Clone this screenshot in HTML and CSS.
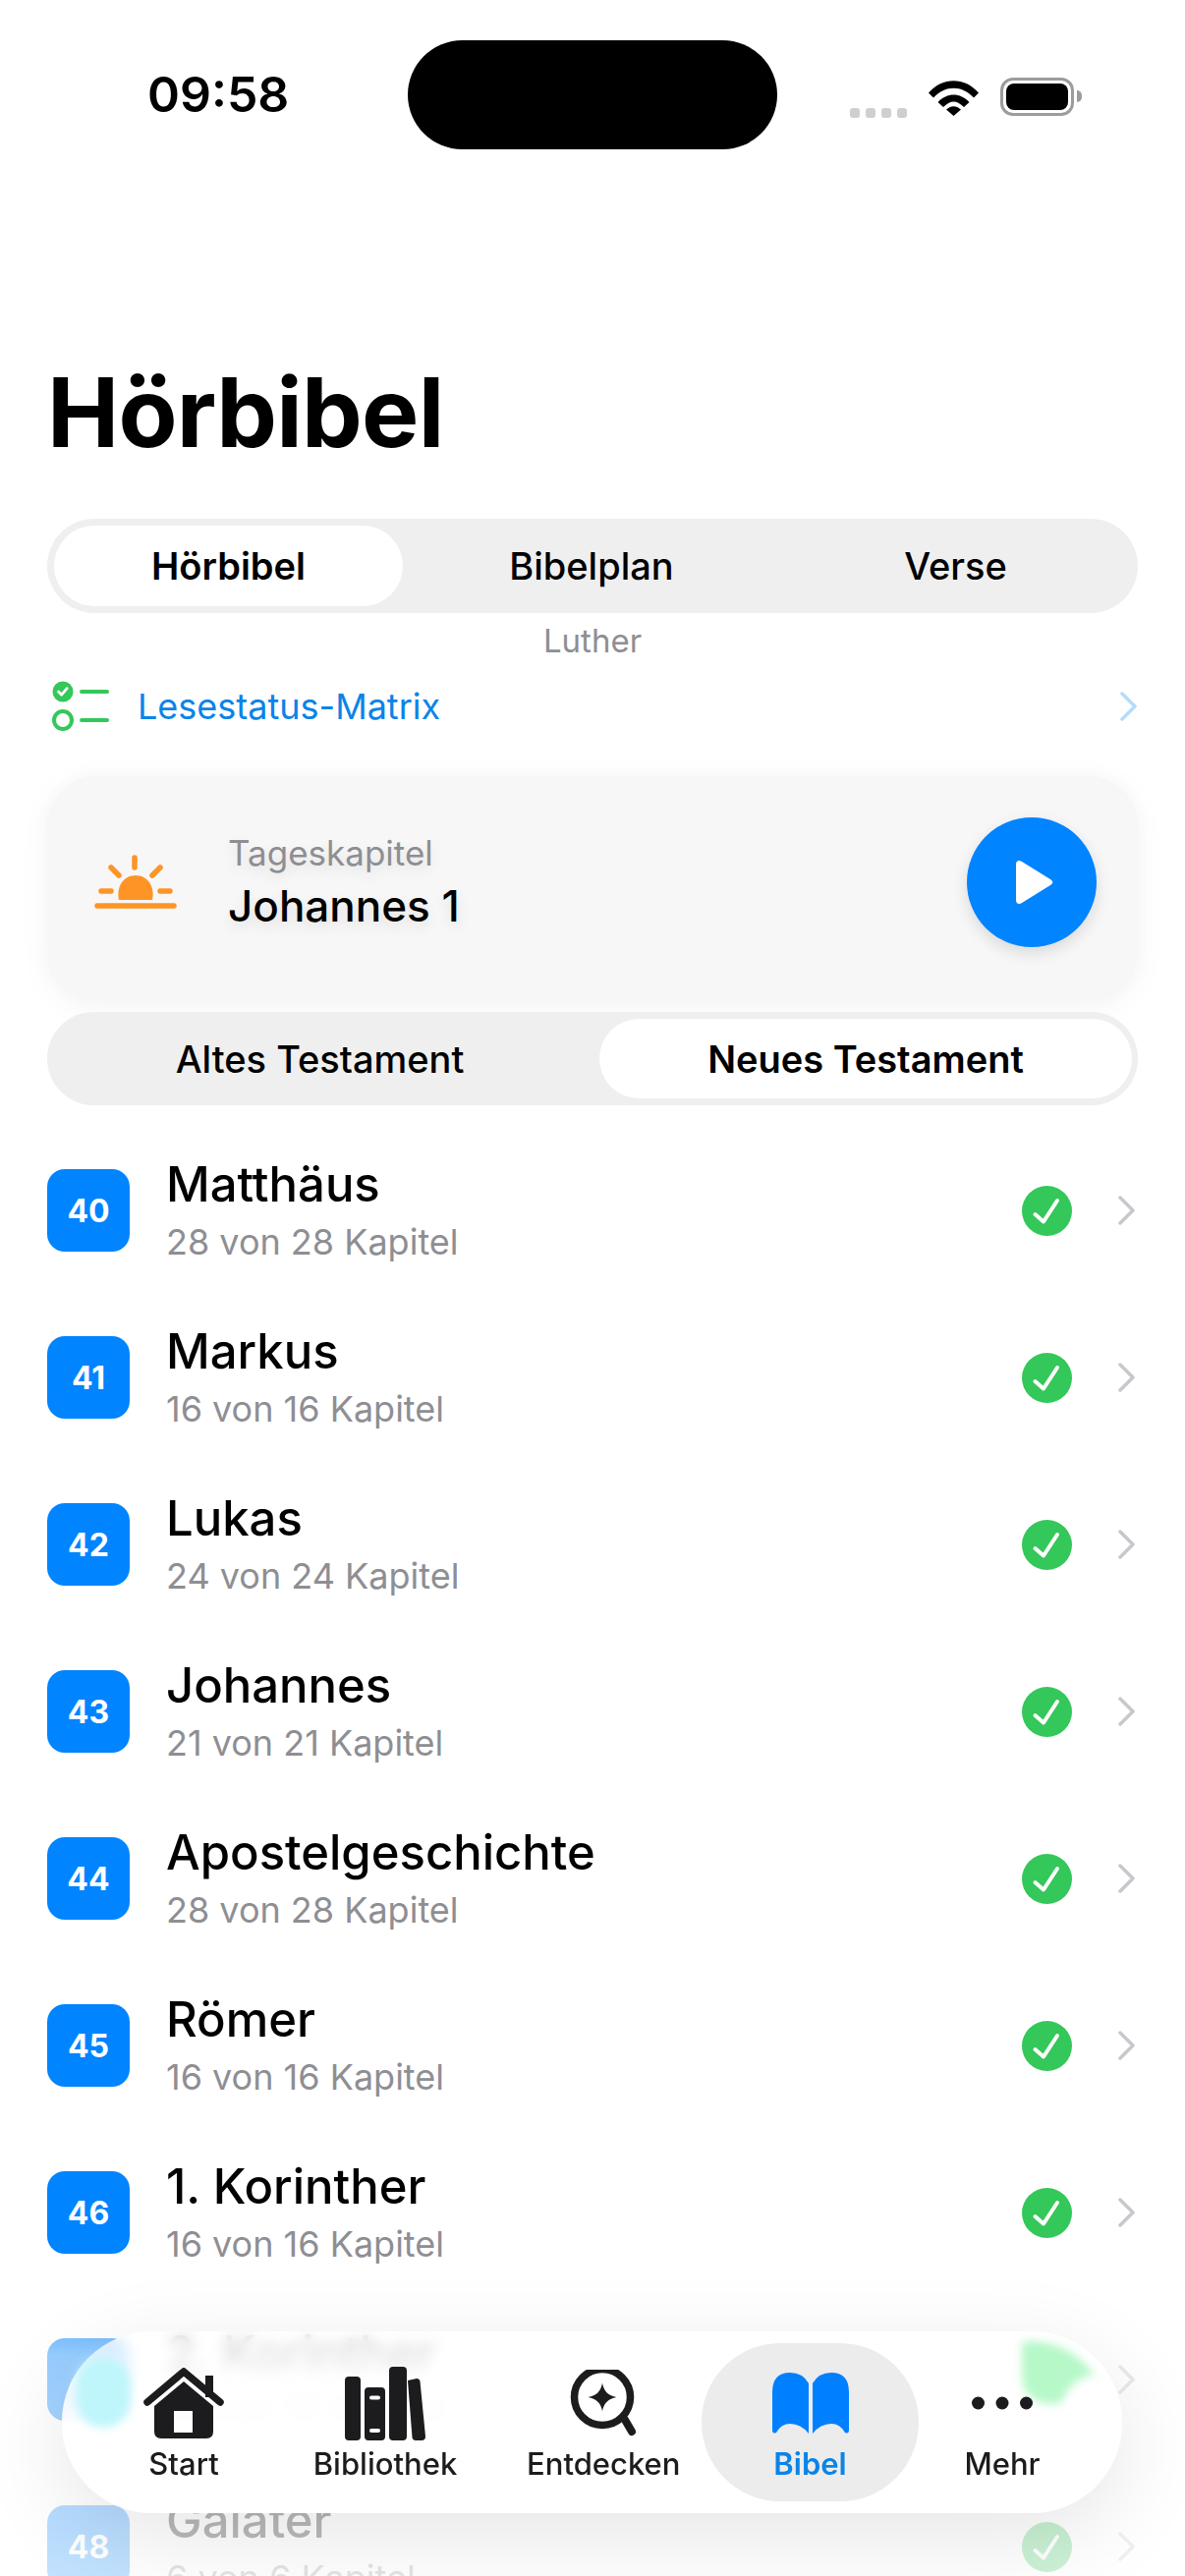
FILE: index.html
```html
<!DOCTYPE html>
<html lang="de">
<head>
<meta charset="utf-8">
<title>Hörbibel</title>
<link rel="stylesheet" href="styles.css">
</head>
<body>
<div class="phone">
  <header class="status">
    <span class="time">09:58</span>
    <span class="island"></span>
    <div class="status-icons">
      <span class="cell-dots"><i></i><i></i><i></i><i></i></span>
      <svg class="wifi" viewBox="0 0 51 38"><path d="M0 14.5C14-2 37-2 51 14.5L46 19.500C34 6.500 17 6.500 5 19.500Z"/><path d="M9.500 24C18.500 14 32.500 14 41.500 24L36 29C29 21.500 22 21.500 15 29Z"/><path d="M18 31.500C23 27 28 27 33 31.500L25.500 38Z"/></svg>
      <span class="battery"><span class="battery-fill"></span></span>
    </div>
  </header>

  <main class="content">
    <h1 class="title">Hörbibel</h1>
    <nav class="seg seg-top">
      <span class="seg-item is-active">Hörbibel</span>
      <span class="seg-item">Bibelplan</span>
      <span class="seg-item">Verse</span>
    </nav>
    <p class="version">Luther</p>
    <div class="matrix">
      <svg class="matrix-icon" viewBox="0 0 60 52"><circle cx="11" cy="11" r="10.500" fill="#34c759"/><path d="M6.500 11l3.200 3.200 5.500-6.500" fill="none" stroke="#fff" stroke-width="2.800" stroke-linecap="round" stroke-linejoin="round"/><circle cx="11" cy="40" r="9" fill="none" stroke="#34c759" stroke-width="4"/><path d="M30 11h26M30 40h26" stroke="#34c759" stroke-width="4" stroke-linecap="round"/></svg>
      <span class="matrix-label">Lesestatus-Matrix</span>
      <svg class="chev chev-blue" viewBox="0 0 18 30"><path d="M2 2l13 13L2 28"/></svg>
    </div>
    <section class="card">
      <svg class="sun" viewBox="0 0 86 56"><path d="M41 3v10M17 13l8 8M67 13l-8 8M7 37h10M67 37h10M3 52h78" stroke="#ff9426" stroke-width="5.500" stroke-linecap="round" fill="none"/><path d="M25 46C22 32 30 21 42 21C54 21 62 32 59 46Z" fill="#ff9426"/></svg>
      <div class="card-text">
        <span class="card-kicker">Tageskapitel</span>
        <span class="card-title">Johannes 1</span>
      </div>
      <button class="play"><svg viewBox="0 0 38 44"><path d="M0 4C0 0 3-1 6 1L35 19C38 21 38 23 35 25L6 43C3 45 0 44 0 40Z" fill="#fff"/></svg></button>
    </section>
    <nav class="seg seg-bottom">
      <span class="seg-item seg-old">Altes Testament</span>
      <span class="seg-item is-active">Neues Testament</span>
    </nav>
    <ul class="books">
      <li class="book"><span class="badge">40</span><div class="book-text"><span class="book-name">Matthäus</span><span class="book-sub">28 von 28 Kapitel</span></div><svg class="done" viewBox="0 0 51 51"><circle cx="25.500" cy="25.500" r="25.500"/><path d="M13.500 29l8.500 7.500L36 15"/></svg><svg class="chev" viewBox="0 0 18 30"><path d="M2 2l13 13L2 28"/></svg></li>
      <li class="book"><span class="badge">41</span><div class="book-text"><span class="book-name">Markus</span><span class="book-sub">16 von 16 Kapitel</span></div><svg class="done" viewBox="0 0 51 51"><circle cx="25.500" cy="25.500" r="25.500"/><path d="M13.500 29l8.500 7.500L36 15"/></svg><svg class="chev" viewBox="0 0 18 30"><path d="M2 2l13 13L2 28"/></svg></li>
      <li class="book"><span class="badge">42</span><div class="book-text"><span class="book-name">Lukas</span><span class="book-sub">24 von 24 Kapitel</span></div><svg class="done" viewBox="0 0 51 51"><circle cx="25.500" cy="25.500" r="25.500"/><path d="M13.500 29l8.500 7.500L36 15"/></svg><svg class="chev" viewBox="0 0 18 30"><path d="M2 2l13 13L2 28"/></svg></li>
      <li class="book"><span class="badge">43</span><div class="book-text"><span class="book-name">Johannes</span><span class="book-sub">21 von 21 Kapitel</span></div><svg class="done" viewBox="0 0 51 51"><circle cx="25.500" cy="25.500" r="25.500"/><path d="M13.500 29l8.500 7.500L36 15"/></svg><svg class="chev" viewBox="0 0 18 30"><path d="M2 2l13 13L2 28"/></svg></li>
      <li class="book"><span class="badge">44</span><div class="book-text"><span class="book-name">Apostelgeschichte</span><span class="book-sub">28 von 28 Kapitel</span></div><svg class="done" viewBox="0 0 51 51"><circle cx="25.500" cy="25.500" r="25.500"/><path d="M13.500 29l8.500 7.500L36 15"/></svg><svg class="chev" viewBox="0 0 18 30"><path d="M2 2l13 13L2 28"/></svg></li>
      <li class="book"><span class="badge">45</span><div class="book-text"><span class="book-name">Römer</span><span class="book-sub">16 von 16 Kapitel</span></div><svg class="done" viewBox="0 0 51 51"><circle cx="25.500" cy="25.500" r="25.500"/><path d="M13.500 29l8.500 7.500L36 15"/></svg><svg class="chev" viewBox="0 0 18 30"><path d="M2 2l13 13L2 28"/></svg></li>
      <li class="book"><span class="badge">46</span><div class="book-text"><span class="book-name">1. Korinther</span><span class="book-sub">16 von 16 Kapitel</span></div><svg class="done" viewBox="0 0 51 51"><circle cx="25.500" cy="25.500" r="25.500"/><path d="M13.500 29l8.500 7.500L36 15"/></svg><svg class="chev" viewBox="0 0 18 30"><path d="M2 2l13 13L2 28"/></svg></li>
      <li class="book"><span class="badge">47</span><div class="book-text"><span class="book-name">2. Korinther</span><span class="book-sub">13 von 13 Kapitel</span></div><svg class="done" viewBox="0 0 51 51"><circle cx="25.500" cy="25.500" r="25.500"/><path d="M13.500 29l8.500 7.500L36 15"/></svg><svg class="chev" viewBox="0 0 18 30"><path d="M2 2l13 13L2 28"/></svg></li>
      <li class="book"><span class="badge">48</span><div class="book-text"><span class="book-name">Galater</span><span class="book-sub">6 von 6 Kapitel</span></div><svg class="done" viewBox="0 0 51 51"><circle cx="25.500" cy="25.500" r="25.500"/><path d="M13.500 29l8.500 7.500L36 15"/></svg><svg class="chev" viewBox="0 0 18 30"><path d="M2 2l13 13L2 28"/></svg></li>
    </ul>
  </main>

  <div class="fade"></div>

  <nav class="tabbar">
    <span class="blob blob-cyan"></span>
    <svg class="blob blob-green" viewBox="0 0 76 70"><path d="M0 5Q0 0 6 0Q50 0 74 35Q50 36 40 62Q18 68 4 50Q0 40 0 5Z" fill="#b6f8c8"/></svg>
    <a class="tab tab-start">
      <span class="tab-icon"><svg width="82" height="72" viewBox="0 0 82 72"><path d="M4 35L41 4L78 35" fill="none" stroke="#1c1c1e" stroke-width="7.500" stroke-linecap="round" stroke-linejoin="round"/><path d="M63 8h8v22h-8z" fill="#1c1c1e"/><path fill-rule="evenodd" d="M41 14L71 39V65Q71 72 64 72H18Q11 72 11 65V39ZM31 44V66H50V44Z" fill="#1c1c1e"/></svg></span>
      <span class="tab-label">Start</span>
    </a>
    <a class="tab">
      <span class="tab-icon"><svg width="82" height="75" viewBox="0 0 82 75" fill="#1c1c1e"><rect x="0" y="10" width="16" height="65" rx="4"/><path fill-rule="evenodd" d="M24 21H37Q41 21 41 25V71Q41 75 37 75H24Q20 75 20 71V25Q20 21 24 21ZM27 29.500Q25 29.500 25 31.500Q25 33.500 27 33.500H34Q36 33.500 36 31.500Q36 29.500 34 29.500ZM27 63Q25 63 25 65Q25 67 27 67H34Q36 67 36 65Q36 63 34 63Z"/><rect x="45" y="0" width="18" height="75" rx="4"/><path d="M64 14L73 12Q76 12 76.500 15L82 71Q82 75 78 75H72Q69 75 68.500 72Z"/></svg></span>
      <span class="tab-label">Bibliothek</span>
    </a>
    <a class="tab tab-search">
      <span class="tab-icon"><svg width="68" height="68" viewBox="0 0 68 68"><circle cx="33" cy="28" r="28.500" fill="none" stroke="#1c1c1e" stroke-width="7.500"/><path d="M56 51L63 63" stroke="#1c1c1e" stroke-width="8" stroke-linecap="round"/><path d="M33 13.500Q35 26 47.500 28Q35 30 33 42.500Q31 30 18.500 28Q31 26 33 13.500Z" fill="#1c1c1e"/></svg></span>
      <span class="tab-label">Entdecken</span>
    </a>
    <a class="tab is-current">
      <span class="tab-icon"><svg width="78" height="62" viewBox="0 0 78 62" fill="#0080ff"><path d="M0 20Q0 0 18 0Q31 0 37 11V62Q29 52 18 52Q9 52 4 61Q0 63 0 58Z"/><path d="M78 20Q78 0 60 0Q47 0 41 11V62Q49 52 60 52Q69 52 74 61Q78 63 78 58Z"/></svg></span>
      <span class="tab-label">Bibel</span>
    </a>
    <a class="tab">
      <span class="tab-icon"><svg width="62" height="14" viewBox="0 0 62 14" fill="#1c1c1e"><circle cx="6.500" cy="7" r="6.500"/><circle cx="31" cy="7" r="6.500"/><circle cx="55.500" cy="7" r="6.500"/></svg></span>
      <span class="tab-label">Mehr</span>
    </a>
  </nav>
</div>
</body>
</html>
```
FILE: styles.css
```css
* { box-sizing: border-box; }
html, body { margin: 0; padding: 0; background: #fff; }
body { font-family: Inter, "Liberation Sans", sans-serif; color: #000; }
.phone { position: relative; width: 1206px; height: 2622px; overflow: hidden; background: #fff; }

/* status bar */
.status { display: flex; align-items: center; height: 152px; padding: 41px 0 0 150px; }
.time { width: 265px; font-size: 50px; font-weight: 600; line-height: 111px; }
.island { width: 376px; height: 111px; border-radius: 56px; background: #000; }
.status-icons { display: flex; align-items: flex-end; height: 40px; margin: 2px 0 0 74px; }
.cell-dots { display: flex; gap: 6px; margin-bottom: -2px; }
.cell-dots i { width: 10px; height: 10px; border-radius: 3px; background: #cfcfcf; }
.wifi { width: 51px; height: 38px; margin: 0 22px 0 22px; display: block; }
.battery { position: relative; display: block; width: 75px; height: 39px; border: 3px solid #9c9c9c; border-radius: 13px; padding: 3px; }
.battery::after { content: ""; position: absolute; right: -11px; top: 10px; width: 5px; height: 12px; border-radius: 0 5px 5px 0; background: #9c9c9c; }
.battery-fill { display: block; height: 100%; border-radius: 8px; background: #000; }

/* main */
.content { padding: 0 48px; }
.title { margin: 210px 0 0; font-size: 98px; font-weight: 700; line-height: 116px; letter-spacing: -.8px; }
.seg { display: grid; height: 96px; padding: 7px; border-radius: 48px; background: #efefef; font-size: 38px; font-weight: 450; }
.seg-top { margin-top: 50px; grid-template-columns: 355px 384px 357px; }
.seg-bottom { margin-top: 10px; height: 95px; grid-template-columns: 555px 542px; }
.seg-item { display: flex; align-items: center; justify-content: center; border-radius: 41px; color: #000; }
.seg-item.is-active { background: #fff; font-weight: 560; }
.seg-old { padding-right: 14px; }
.version { margin: 8px 0 0; text-align: center; font-size: 33px; line-height: 40px; color: #8e8e93; }
.matrix { display: flex; align-items: center; height: 72px; margin-top: 11px; padding-left: 5px; }
.matrix-icon { width: 60px; height: 52px; }
.matrix-label { margin-left: 27px; font-size: 36px; color: #0a84e8; flex: 1; }
.chev { width: 18px; height: 30px; margin-right: 2px; fill: none; stroke: #c7c7cc; stroke-width: 3.500; stroke-linecap: round; stroke-linejoin: round; }
.chev-blue { stroke: #b5dcfb; margin-right: 0; }

.card { display: flex; align-items: center; height: 230px; margin-top: 35px; padding: 0 42px 14px 48px; border-radius: 50px; background: #f7f7f7; box-shadow: 0 0 14px #f7f7f7, 0 6px 34px rgba(0, 0, 0, .04); }
.sun { width: 86px; height: 56px; }
.card-text { display: flex; flex-direction: column; flex: 1; margin-left: 50px; text-shadow: 0 6px 14px rgba(0, 0, 0, .1); }
.card-kicker { font-size: 35px; line-height: 48px; color: #8e8e93; }
.card-title { font-size: 44px; font-weight: 550; line-height: 60px; }
.play { display: flex; align-items: center; justify-content: center; width: 132px; height: 132px; padding: 0 0 0 5px; border: 0; border-radius: 50%; background: #0084ff; box-shadow: 0 6px 16px rgba(0, 0, 0, .12); }
.play svg { width: 38px; height: 44px; }

/* list */
.books { list-style: none; margin: 22px 0 0; padding: 0; }
.book { display: flex; align-items: center; height: 170px; }
.badge { display: flex; align-items: center; justify-content: center; width: 84px; height: 84px; border-radius: 18px; background: #0084ff; color: #fff; font-size: 32px; font-weight: 700; }
.book-text { display: flex; flex-direction: column; flex: 1; gap: 8px; margin-left: 37px; }
.book-name { font-size: 49px; font-weight: 450; line-height: 56px; }
.book-sub { font-size: 36px; line-height: 44px; color: #8e8e93; }
.done { width: 51px; height: 51px; margin-right: 47px; }
.done circle { fill: #34c759; }
.done path { fill: none; stroke: #fff; stroke-width: 4; stroke-linecap: round; stroke-linejoin: round; }

/* overlays */
.fade { position: absolute; left: 0; right: 0; bottom: 0; height: 320px; background: linear-gradient(to bottom, rgba(255, 255, 255, 0), rgba(255, 255, 255, .6) 30%, rgba(255, 255, 255, .76)); }
.tabbar { position: absolute; left: 63px; top: 2373px; width: 1079px; height: 185px; display: grid; grid-template-columns: 205px 205px 219.500px 221px 170px; padding: 12px 37px 12px 21.500px; border-radius: 92px; background: linear-gradient(to bottom, rgba(255, 255, 255, .62), rgba(255, 255, 255, .94) 55%, #fff); -webkit-backdrop-filter: blur(7px); backdrop-filter: blur(7px); box-shadow: 0 24px 90px rgba(0, 0, 0, .1); }
.blob { position: absolute; display: block; filter: blur(4px); }
.blob-cyan { left: 14px; top: 26px; width: 56px; height: 72px; border-radius: 28px; background: #bff6fb; }
.blob-green { left: 977px; top: 10px; width: 76px; height: 70px; }
.tab { position: relative; display: flex; flex-direction: column; align-items: center; padding-top: 17px; border-radius: 80px; color: #1c1c1e; }
.tab-search { padding-left: 20px; }
.tab-icon { display: flex; align-items: center; justify-content: center; height: 88px; }
.tab-label { font-size: 31px; font-weight: 450; line-height: 36px; }
.is-current { background: #ececec; color: #0a84e8; }
.is-current .tab-label { font-weight: 600; }
```
